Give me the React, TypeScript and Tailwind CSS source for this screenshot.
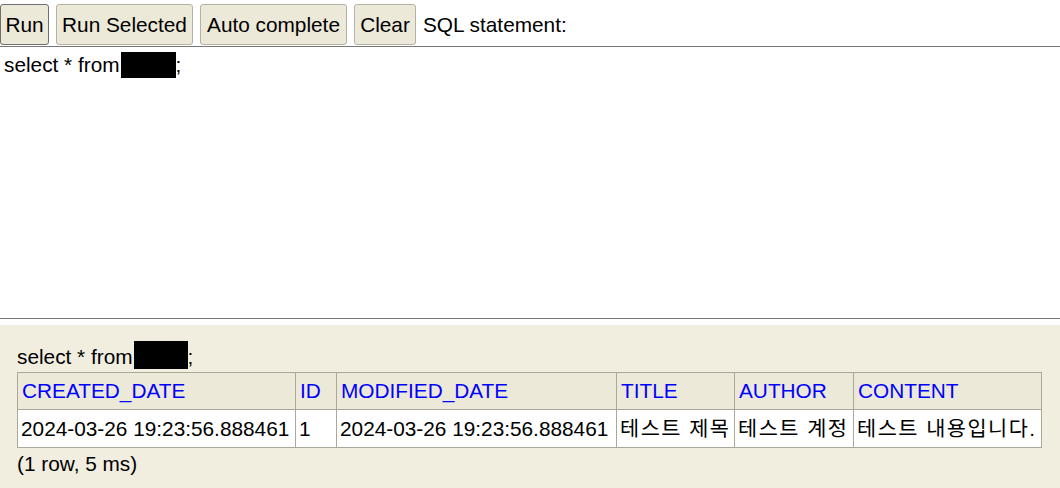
import React from "react";

const columns = ["CREATED_DATE", "ID", "MODIFIED_DATE", "TITLE", "AUTHOR", "CONTENT"];
const widths = ["w-[278px]", "w-[41px]", "w-[280px]", "w-[118px]", "w-[119px]", "w-[188px]"];
const row = [
  "2024-03-26 19:23:56.888461",
  "1",
  "2024-03-26 19:23:56.888461",
  "테스트 제목",
  "테스트 계정",
  "테스트 내용입니다.",
];

const buttons = [
  { label: "Run", w: "w-[49px] border-[#6f6f6f]" },
  { label: "Run Selected", w: "w-[137px] border-[#b4b2a6]" },
  { label: "Auto complete", w: "w-[147px] border-[#b4b2a6]" },
  { label: "Clear", w: "w-[62px] border-[#b4b2a6]" },
];

export default function App() {
  return (
    <div
      className="w-[1060px] h-[488px] overflow-hidden bg-white text-black flex flex-col text-[20.8px] leading-[24px]"
      style={{ fontFamily: '"Liberation Sans", Arial, "Noto Sans CJK KR", sans-serif' }}
    >
      {/* toolbar */}
      <div className="flex items-center gap-[7px] pt-[4px] pb-[1px] h-[46px]">
        {buttons.map((b) => (
          <button
            key={b.label}
            className={"h-[41px] px-0 text-center rounded-[3px] bg-[#ece9d8] border " + b.w}
          >
            {b.label}
          </button>
        ))}
        <span>SQL statement:</span>
      </div>

      {/* editor */}
      <div className="h-[273px] shrink-0 border-t border-b border-[#777777] px-[4px] pt-[5px]">
        <div className="flex items-center">
          <span>select * from</span>
          <span className="inline-block w-[55px] h-[26px] bg-black ml-[1px]" />
          <span>;</span>
        </div>
      </div>

      <div className="h-[6px] shrink-0" />

      {/* result */}
      <div className="flex-1 bg-[#f1eee0] px-[17px] pt-[16px]">
        <div className="flex items-end h-[28px]">
          <span>select * from</span>
          <span className="inline-block w-[54px] h-[28px] bg-black ml-[1px]" />
          <span>;</span>
        </div>
        <table className="mt-[3px] w-[1024px] table-fixed border-collapse">
          <colgroup>
            {widths.map((w, i) => (
              <col key={i} className={w} />
            ))}
          </colgroup>
          <thead>
            <tr className="h-[37px] bg-[#ece9d8]">
              {columns.map((c) => (
                <th
                  key={c}
                  className="border border-[#aca899] px-[4px] text-left font-normal text-[#0000ff] whitespace-nowrap"
                >
                  {c}
                </th>
              ))}
            </tr>
          </thead>
          <tbody>
            <tr className="h-[38px] bg-white">
              {row.map((v, i) => (
                <td
                  key={i}
                  className={
                    "border border-[#aca899] px-[3px] whitespace-nowrap overflow-hidden" +
                    (i >= 3 ? " tracking-[1.5px]" : "")
                  }
                >
                  {v}
                </td>
              ))}
            </tr>
          </tbody>
        </table>
        <div className="mt-[4px]">(1 row, 5 ms)</div>
      </div>
    </div>
  );
}
